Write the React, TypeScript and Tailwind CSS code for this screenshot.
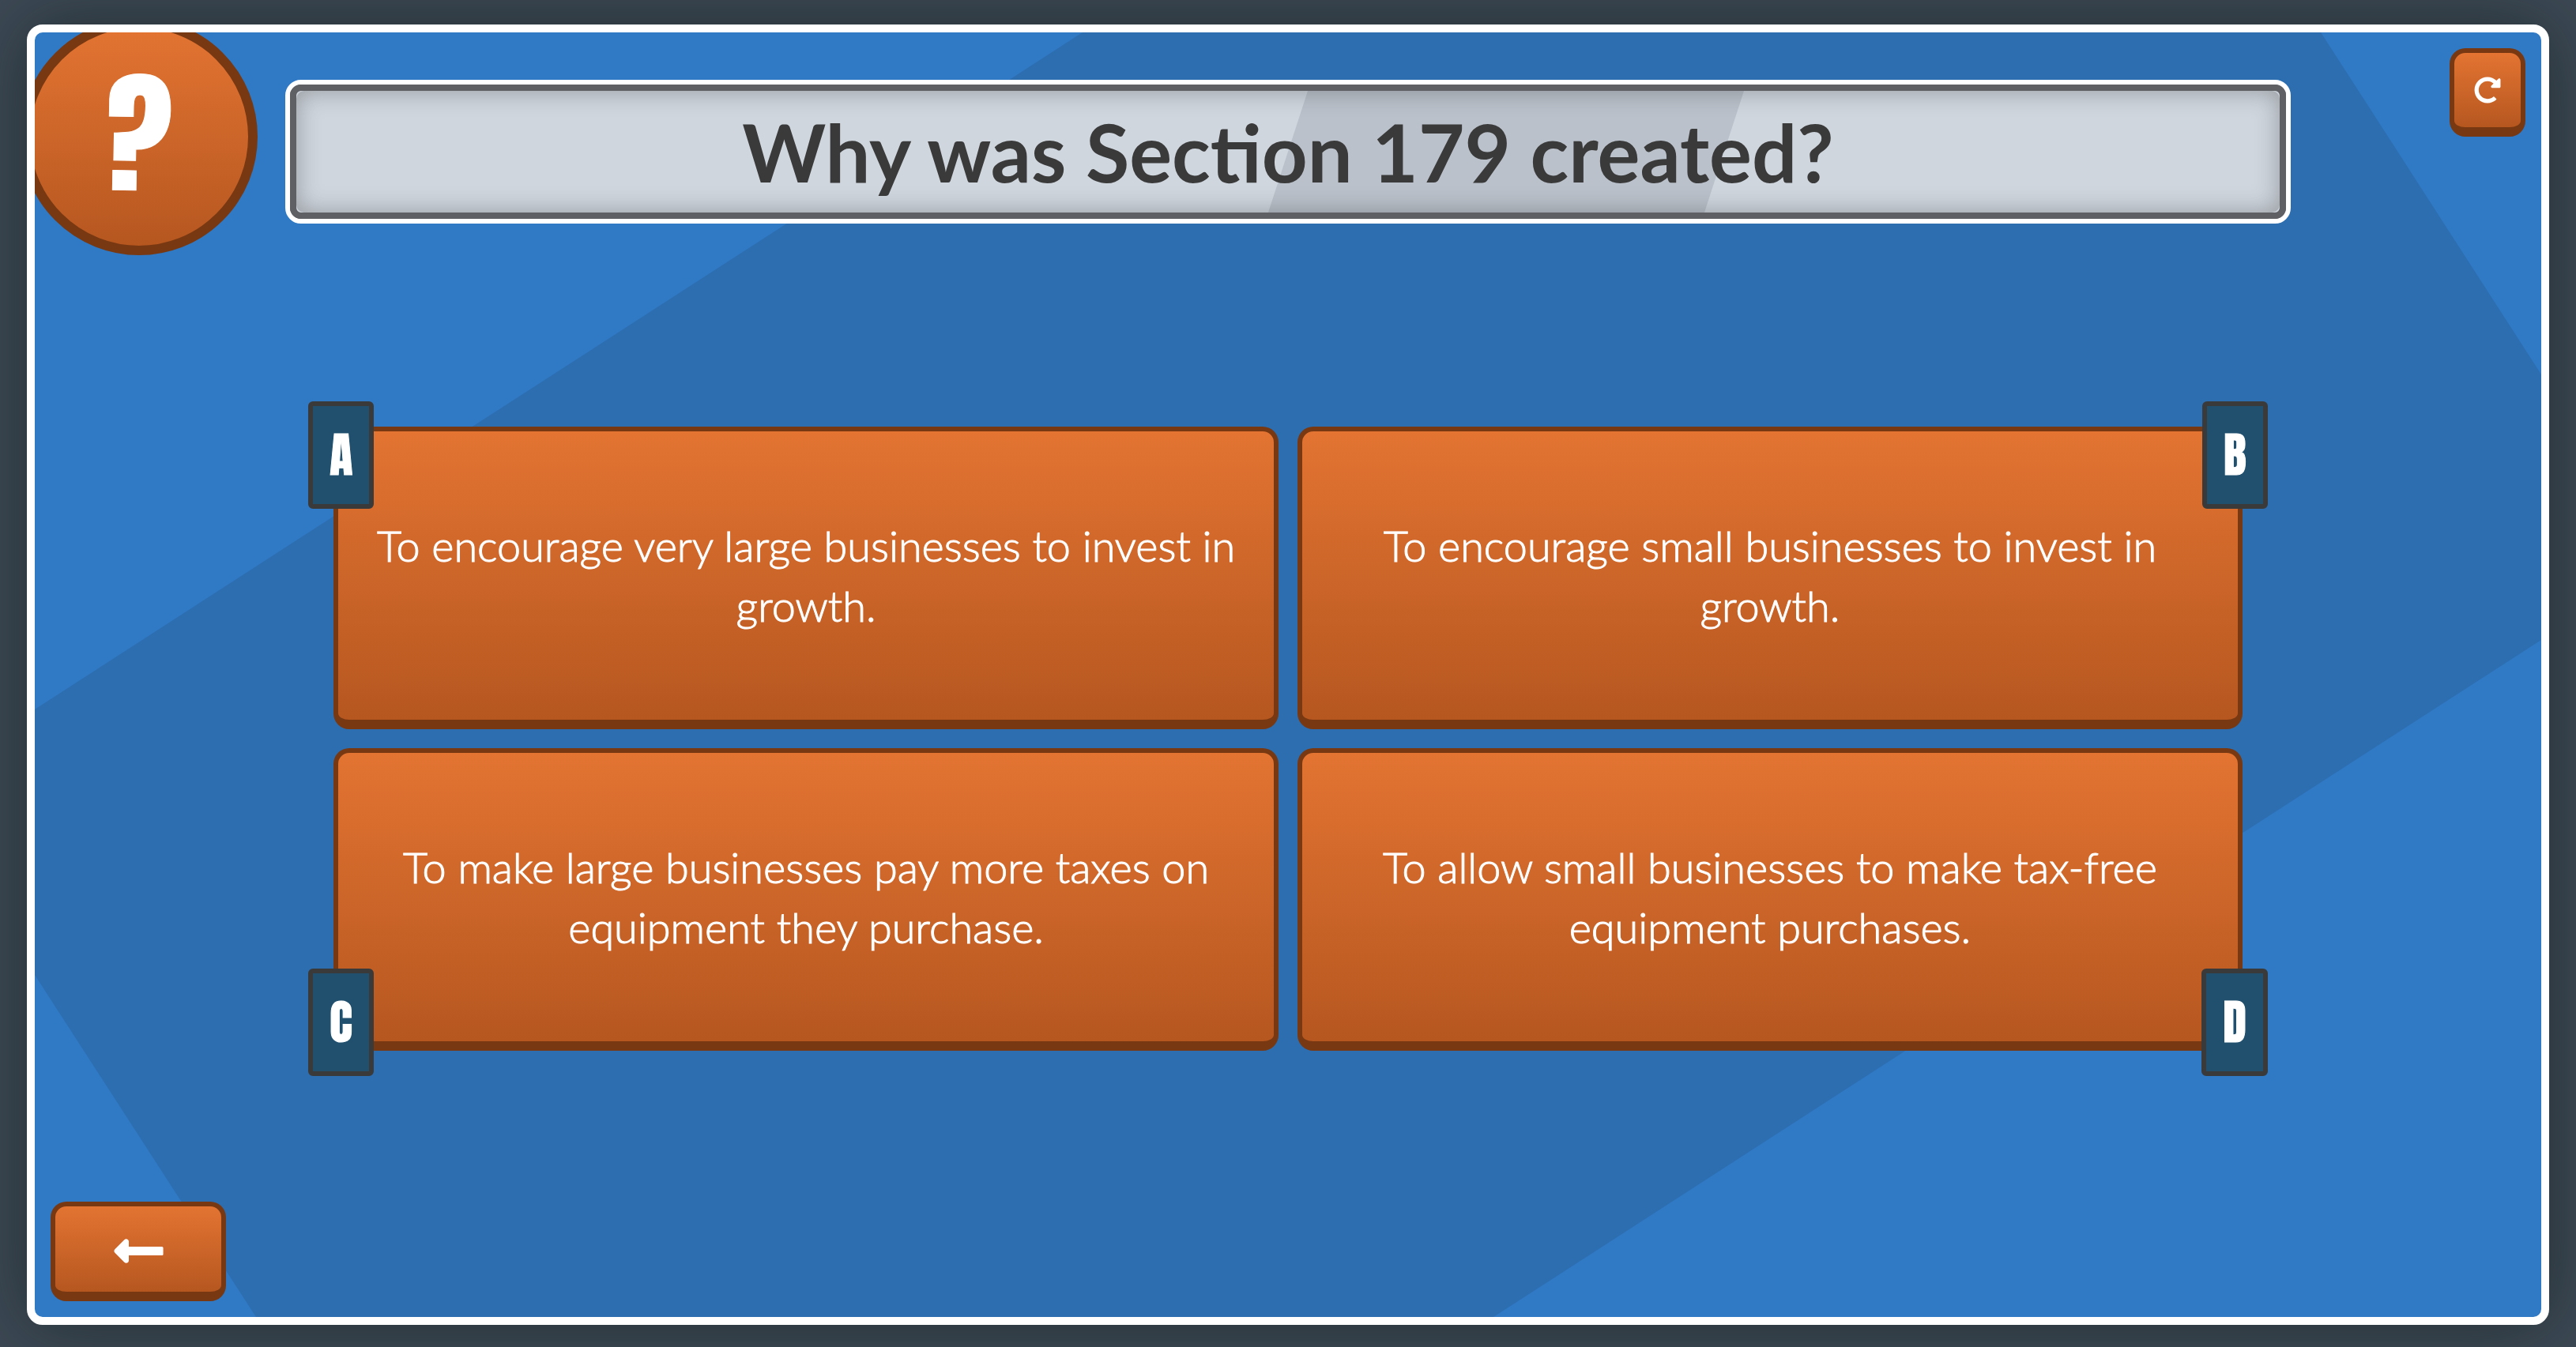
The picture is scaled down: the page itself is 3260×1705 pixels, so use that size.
import React from "react";
import { FaLongArrowAltLeft, FaRedoAlt } from "react-icons/fa";

const orange =
  "border-[6px] border-b-[12px] border-[#783812] bg-linear-to-b from-[#e37432] to-[#b65720] rounded-[20px] text-white cursor-pointer";

const answers = [
  { key: "A", text: "To encourage very large businesses to invest in growth.", corner: "-left-[38px] -top-[38px]" },
  { key: "B", text: "To encourage small businesses to invest in growth.", corner: "-right-[38px] -top-[38px]" },
  { key: "C", text: "To make large businesses pay more taxes on equipment they purchase.", corner: "-left-[38px] -bottom-[44px]" },
  { key: "D", text: "To allow small businesses to make tax-free equipment purchases.", corner: "-right-[38px] -bottom-[44px]" },
];

function Answer({ label, text, corner }: { label: string; text: string; corner: string }) {
  return (
    <button className={`relative flex items-center justify-center px-10 ${orange}`}>
      <span className="text-[54px] leading-[76px] font-light [-webkit-text-stroke:1px_white]">{text}</span>
      <span
        className={`absolute ${corner} flex h-[136px] items-center justify-center rounded-[6px] border-[6px] border-[#3a3a3a] bg-[#20506e] px-[21px] font-['Anton','Impact',sans-serif] text-[60px] leading-none font-normal [-webkit-text-stroke:1px_white]`}
      >
        {label}
      </span>
    </button>
  );
}

export default function App() {
  return (
    <div className="flex h-screen bg-[#3d4955] px-[34px] pt-[31px] pb-[28px] font-['Lato',sans-serif]">
      <main className="relative flex flex-1 flex-col items-center overflow-hidden rounded-[20px] border-[10px] border-white bg-[#3079c4] shadow-[0_0_90px_rgba(10,20,15,0.5)]">
        <svg className="absolute inset-0 h-full w-full" viewBox="0 0 3172 1626" preserveAspectRatio="none" aria-hidden="true">
          <path d="M1326 0H2893L3172 433V769L1846 1626H280L0 1193V857Z" fill="#2d6eb0" />
        </svg>

        <div className="absolute -top-[18px] -left-[18px] flex size-[300px] items-center justify-center rounded-full border-[12px] border-[#783812] bg-linear-to-b from-[#e37432] to-[#b65720] pb-2 font-['Anton','Impact',sans-serif] text-[170px] leading-none font-normal text-white [-webkit-text-stroke:1px_white]">
          <span className="rotate-1">?</span>
        </div>

        <button aria-label="Restart" className={`absolute top-5 right-5 flex h-[112px] w-24 items-center justify-center ${orange}`}>
          <FaRedoAlt size={34} />
        </button>

        <header className="relative mt-[60px] w-4/5 rounded-[20px] border-[6px] border-white bg-[#5f6064]">
          <div className="relative overflow-hidden rounded-[14px] border-8 border-[#5f6064] bg-[#cfd6de]">
            <div className="absolute inset-y-0 left-1/2 w-[22%] -skew-x-[18deg] bg-[#bac1ca]" />
            <div className="absolute inset-0 rounded-[10px] shadow-[inset_0_0_30px_rgba(60,60,60,0.4)]" />
            <h1 className="relative text-center text-[101px] leading-[154px] font-bold text-[#3a3a3a]">Why was Section 179 created?</h1>
          </div>
        </header>

        <section className="relative mt-[257px] grid w-4/5 auto-rows-[383px] grid-cols-2 gap-6 px-[61px]">
          {answers.map((a) => (
            <Answer key={a.key} label={a.key} text={a.text} corner={a.corner} />
          ))}
        </section>

        <button aria-label="Back" className={`absolute bottom-5 left-5 flex h-[126px] w-[222px] items-center justify-center pt-1 ${orange}`}>
          <FaLongArrowAltLeft size={71} />
        </button>
      </main>
    </div>
  );
}
